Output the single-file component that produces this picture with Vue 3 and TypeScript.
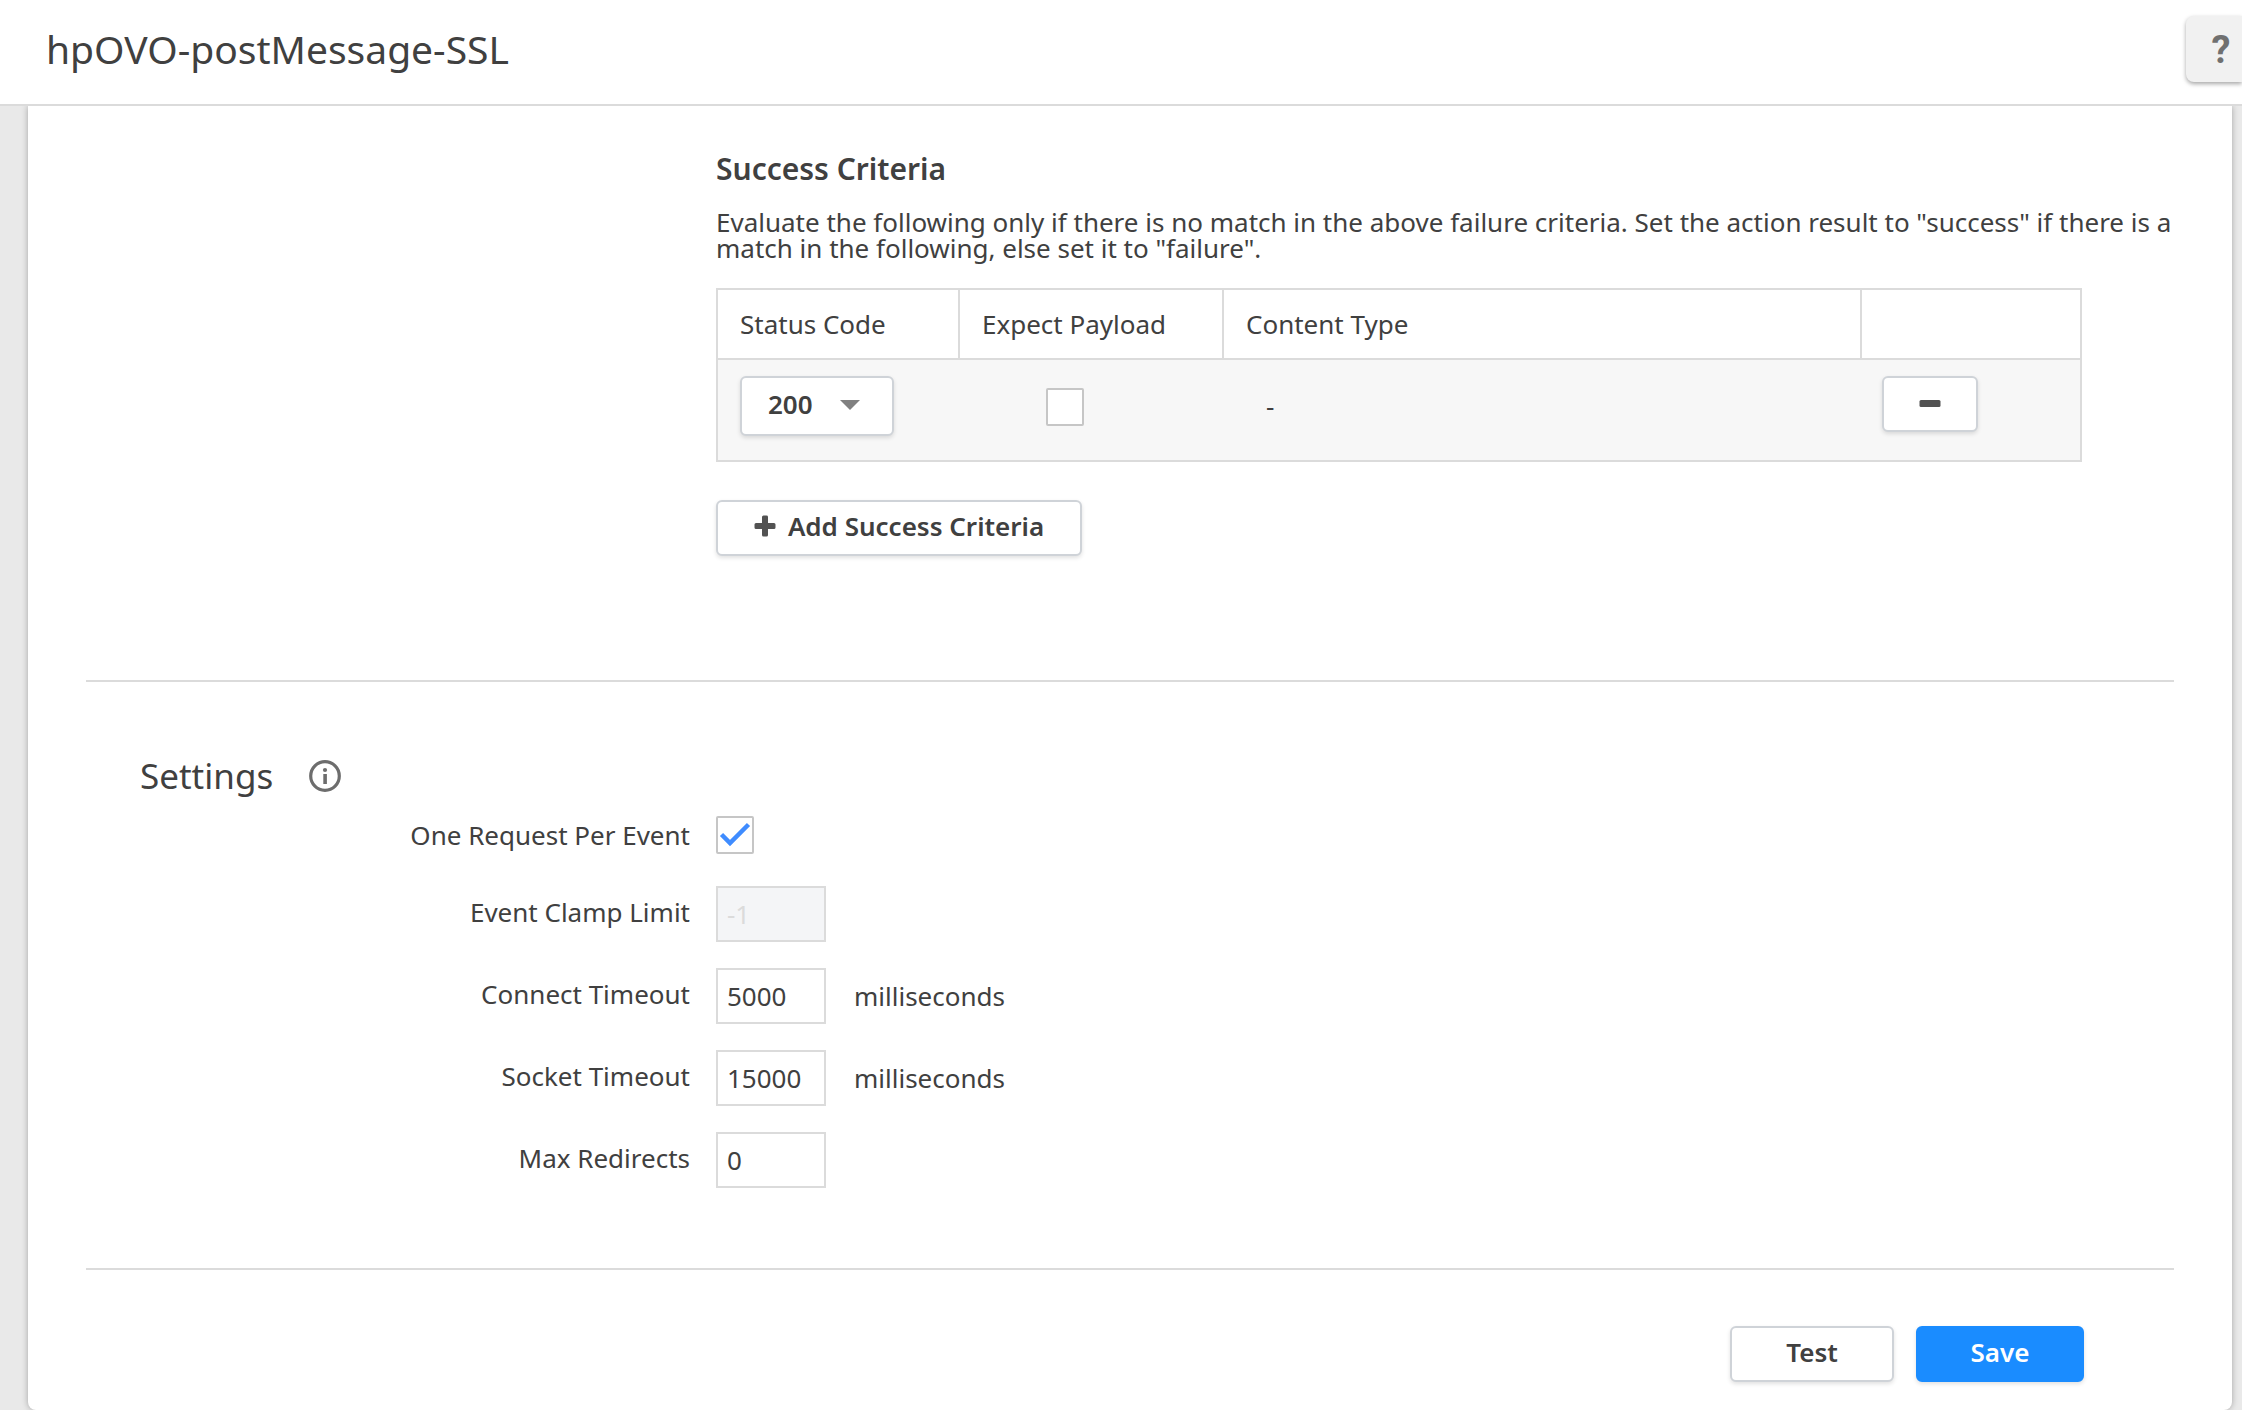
<script setup lang="ts">
import { ref } from 'vue'

interface Criterion {
  id: number
  status: string
  payload: boolean
  contentType: string
}

interface NumberField {
  id: string
  label: string
  value: string
  unit?: string
  disabled?: boolean
}

const statusCodes = ['200', '201', '202', '204']

const criteria = ref<Criterion[]>([{ id: 1, status: '200', payload: false, contentType: '-' }])

const onePerEvent = ref(true)

const fields = ref<NumberField[]>([
  { id: 'clamp-limit', label: 'Event Clamp Limit', value: '-1', disabled: true },
  { id: 'connect-timeout', label: 'Connect Timeout', value: '5000', unit: 'milliseconds' },
  { id: 'socket-timeout', label: 'Socket Timeout', value: '15000', unit: 'milliseconds' },
  { id: 'max-redirects', label: 'Max Redirects', value: '0' },
])

let nextId = 2

function addCriterion(): void {
  criteria.value.push({ id: nextId++, status: '200', payload: false, contentType: '-' })
}

function removeCriterion(id: number): void {
  criteria.value = criteria.value.filter((c) => c.id !== id)
}
</script>

<template>
  <div class="page">
    <header class="header">
      <h1 class="title">hpOVO-postMessage-SSL</h1>
      <button class="help" type="button">?</button>
    </header>

    <main class="card">
      <section class="success">
        <h3 class="subheading">Success Criteria</h3>
        <p class="description">
          Evaluate the following only if there is no match in the above failure criteria. Set the
          action result to "success" if there is a match in the following, else set it to "failure".
        </p>
        <table class="criteria">
          <colgroup>
            <col class="col-status" />
            <col class="col-payload" />
            <col />
            <col class="col-remove" />
          </colgroup>
          <thead>
            <tr>
              <th scope="col">Status Code</th>
              <th scope="col">Expect Payload</th>
              <th scope="col">Content Type</th>
              <th></th>
            </tr>
          </thead>
          <tbody>
            <tr v-for="c in criteria" :key="c.id">
              <td>
                <div class="select-wrap">
                  <select v-model="c.status" class="select" aria-label="Status Code">
                    <option v-for="code in statusCodes" :key="code">{{ code }}</option>
                  </select>
                  <svg class="caret" viewBox="0 0 20 10" aria-hidden="true">
                    <path d="M0 0h20L10 10z" fill="#808080" />
                  </svg>
                </div>
              </td>
              <td class="payload">
                <input v-model="c.payload" class="check" type="checkbox" aria-label="Expect Payload" />
              </td>
              <td class="content-type">{{ c.contentType }}</td>
              <td class="remove">
                <button class="btn btn-remove" type="button" aria-label="Remove" @click="removeCriterion(c.id)">
                  <svg width="22" height="22" viewBox="0 0 22 22" aria-hidden="true">
                    <rect x="0.5" y="9" width="21" height="7" rx="1.5" fill="#525252" />
                  </svg>
                </button>
              </td>
            </tr>
          </tbody>
        </table>
        <button class="btn btn-add" type="button" @click="addCriterion">
          <svg width="22" height="22" viewBox="0 0 22 22" aria-hidden="true">
            <path
              d="M9.500 .5h3a1.500 1.500 0 0 1 1.500 1.500v6H20A1.500 1.500 0 0 1 21.500 9.500v3a1.500 1.500 0 0 1-1.500 1.500h-6V20a1.500 1.500 0 0 1-1.500 1.500h-3A1.500 1.500 0 0 1 8 20v-6H2A1.500 1.500 0 0 1 .5 12.500v-3A1.500 1.500 0 0 1 2 8h6V2A1.500 1.500 0 0 1 9.500 .5z"
              fill="#525252"
            />
          </svg>
          Add Success Criteria
        </button>
      </section>

      <section class="settings">
        <h2 class="heading">
          Settings
          <svg width="32" height="32" viewBox="0 0 32 32" aria-hidden="true">
            <circle cx="16" cy="16" r="14.300" fill="none" stroke="#6d6d6d" stroke-width="3.200" />
            <circle cx="16" cy="10" r="2.100" fill="#6d6d6d" />
            <rect x="14.300" y="14" width="3.600" height="10" fill="#6d6d6d" />
          </svg>
        </h2>
        <div class="row row-check">
          <label for="one-request">One Request Per Event</label>
          <input id="one-request" v-model="onePerEvent" class="check" type="checkbox" />
        </div>
        <div v-for="f in fields" :key="f.id" class="row">
          <label :for="f.id">{{ f.label }}</label>
          <input :id="f.id" v-model="f.value" class="text" type="text" :disabled="f.disabled" />
          <span v-if="f.unit" class="unit">{{ f.unit }}</span>
        </div>
      </section>

      <footer class="actions">
        <button class="btn btn-test" type="button">Test</button>
        <button class="btn btn-save" type="button">Save</button>
      </footer>
    </main>
  </div>
</template>

<style>
body {
  background: #e9e9e9;
}
</style>

<style scoped>
.page,
.page * {
  box-sizing: border-box;
}

.page {
  font-family: 'Noto Sans', 'Open Sans', sans-serif;
  font-size: 26px;
  line-height: 26px;
  color: #404040;
  overflow: hidden;
}

h1,
h2,
h3,
p {
  margin: 0;
}

button,
input,
select {
  margin: 0;
  font: inherit;
  color: inherit;
}

.header {
  position: relative;
  display: flex;
  justify-content: space-between;
  height: 106px;
  padding: 16px 0 0 46px;
  background: #fff;
  border-bottom: 2px solid #dbdbdb;
}

.title {
  font-size: 39px;
  font-weight: 400;
  line-height: 66px;
}

.help {
  width: 56px;
  height: 66px;
  padding: 2px 0 0 14px;
  border: 0;
  border-radius: 8px 0 0 8px;
  background: #f1f1f1;
  box-shadow: 0 2px 4px rgba(0, 0, 0, 0.35);
  font-family: Roboto, sans-serif;
  font-size: 38px;
  font-weight: 700;
  line-height: 40px;
  color: #707070;
}

.card {
  margin: 0 10px 0 28px;
  padding: 48px 58px 28px;
  background: #fff;
  border-radius: 0 0 8px 8px;
  box-shadow: 0 0 6px rgba(0, 0, 0, 0.3);
}

.success {
  padding: 0 0 124px 630px;
  border-bottom: 2px solid #dbdbdb;
}

.subheading {
  margin-bottom: 25px;
  font-size: 30px;
  font-weight: 600;
  line-height: 30px;
}

.description {
  margin: 0 -20px 27px 0;
}

.criteria {
  width: calc(100% - 92px);
  margin-bottom: 38px;
  table-layout: fixed;
  border: 2px solid #dbdbdb;
  border-collapse: separate;
  border-spacing: 0;
}

.col-status {
  width: 242px;
}

.col-payload {
  width: 264px;
}

.col-remove {
  width: 218px;
}

th {
  height: 70px;
  padding: 0 22px;
  border-right: 2px solid #dbdbdb;
  border-bottom: 2px solid #dbdbdb;
  font-weight: 400;
  text-align: left;
}

th:last-child {
  border-right: 0;
}

td {
  height: 100px;
  padding: 16px 22px 0;
  background: #f7f7f7;
  vertical-align: top;
}

td.payload {
  padding: 28px 0 0 86px;
}

td.content-type {
  padding: 28px 0 0 42px;
  line-height: 36px;
}

td.remove {
  padding-left: 20px;
}

.select-wrap {
  position: relative;
  width: 154px;
}

.select {
  display: block;
  width: 100%;
  height: 60px;
  padding: 0 26px 4px;
  appearance: none;
  background: #fff;
  border: 2px solid #cfd3d8;
  border-radius: 6px;
  box-shadow: 0 2px 4px rgba(0, 0, 0, 0.12);
  font-weight: 600;
}

.caret {
  position: absolute;
  top: 24px;
  right: 34px;
  width: 20px;
  height: 10px;
  pointer-events: none;
}

.check {
  display: block;
  width: 38px;
  height: 38px;
  appearance: none;
  background: #fff;
  border: 2px solid #c6c6c6;
  border-radius: 2px;
}

.check:checked {
  background: #fff
    url("data:image/svg+xml,%3Csvg xmlns='http://www.w3.org/2000/svg' viewBox='0 0 34 34'%3E%3Cpath d='M3.500 16.500L12 25L30.500 6.500' fill='none' stroke='%233f8cff' stroke-width='4.500'/%3E%3C/svg%3E")
    center / 34px 34px no-repeat;
}

.btn {
  display: flex;
  align-items: center;
  justify-content: center;
  gap: 12px;
  height: 56px;
  padding: 0 0 4px;
  background: #fff;
  border: 2px solid #cfd3d8;
  border-radius: 6px;
  box-shadow: 0 2px 4px rgba(0, 0, 0, 0.12);
  font-weight: 600;
}

.btn-remove {
  width: 96px;
}

.btn-add {
  width: 366px;
}

.btn-test {
  width: 164px;
}

.btn-save {
  width: 168px;
  background: #1a8cff;
  border-color: #1a8cff;
  color: #fff;
}

.settings {
  display: flex;
  flex-direction: column;
  gap: 26px;
  padding: 70px 0 80px;
  border-bottom: 2px solid #dbdbdb;
}

.heading {
  display: flex;
  align-items: center;
  gap: 36px;
  margin: 0 0 -10px 54px;
  font-size: 35px;
  font-weight: 400;
  line-height: 48px;
}

.row {
  display: flex;
  align-items: center;
}

.row label {
  width: 604px;
  margin-right: 26px;
  padding-bottom: 4px;
  text-align: right;
}

.row-check {
  margin-bottom: 6px;
}

.row-check label {
  padding-bottom: 0;
}

.text {
  width: 110px;
  height: 56px;
  padding: 0 9px;
  background: #fff;
  border: 2px solid #dbdbdb;
  border-radius: 0;
}

.text:disabled {
  background: #f4f5f7;
  color: #dbdbdb;
}

.unit {
  margin-left: 28px;
}

.actions {
  display: flex;
  justify-content: flex-end;
  gap: 22px;
  padding: 56px 90px 0 0;
}
</style>
